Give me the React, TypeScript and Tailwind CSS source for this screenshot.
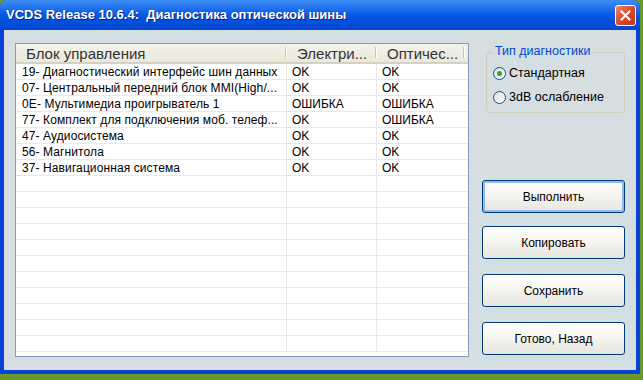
import React from "react";

const rows = [
  ["19- Диагностический интерфейс шин данных", "OK", "OK"],
  ["07- Центральный передний блок MMI(High/...", "OK", "OK"],
  ["0E- Мультимедиа проигрыватель 1", "ОШИБКА", "ОШИБКА"],
  ["77- Комплект для подключения моб. телеф...", "OK", "ОШИБКА"],
  ["47- Аудиосистема", "OK", "OK"],
  ["56- Магнитола", "OK", "OK"],
  ["37- Навигационная система", "OK", "OK"],
];

const emptyRows = Array.from({ length: 11 });

function HeaderCell({ label, width }: { label: string; width: string }) {
  return (
    <div className={`${width} h-full flex items-center pl-[10px] relative`}>
      <span className="text-[15px] text-[#333] leading-none">{label}</span>
      <div className="absolute right-0 top-[3px] bottom-[4px] w-[2px] border-l border-[#c7c5b2] bg-white" />
    </div>
  );
}

function Row({ cells }: { cells: string[] }) {
  return (
    <div className="flex h-[16px] border-b border-[#ebe8df]">
      <div className="w-[271px] border-r border-[#ebe8df] pl-[6px] flex items-center text-[12px] tracking-[0.1px] leading-none whitespace-nowrap overflow-hidden">
        {cells[0]}
      </div>
      <div className="w-[90px] border-r border-[#ebe8df] pl-[5px] flex items-center text-[12px] leading-none">
        {cells[1]}
      </div>
      <div className="w-[88px] pl-[5px] flex items-center text-[12px] leading-none">
        {cells[2]}
      </div>
    </div>
  );
}

function Radio({ checked, label }: { checked?: boolean; label: string }) {
  return (
    <div className="flex items-center gap-[3px]">
      <div className="w-[13px] h-[13px] rounded-full border border-[#1c5180] bg-gradient-to-br from-[#dcdcd6] to-white flex items-center justify-center">
        {checked && <div className="w-[5px] h-[5px] rounded-full bg-[#2fa52f]" />}
      </div>
      <span className="text-[12.5px] leading-none">{label}</span>
    </div>
  );
}

function XpButton({ label, focused, className = "" }: { label: string; focused?: boolean; className?: string }) {
  return (
    <button
      className={`w-[143px] h-[33px] rounded-[3px] border border-[#003c74] bg-gradient-to-b from-white via-[#f4f4f0] to-[#e6e5de] text-[12px] text-black flex items-center justify-center ${className} ${
        focused ? "shadow-[inset_0_0_0_2px_#98b8f1]" : ""
      }`}
    >
      {label}
    </button>
  );
}

export default function App() {
  return (
    <div
      className="w-[643px] h-[380px] bg-[#6a9a2c] overflow-hidden"
      style={{ fontFamily: '"Liberation Sans", Arial, sans-serif' }}
    >
      <div className="w-[640px] h-[374px] rounded-t-[7px] bg-[#0a3fd8] flex flex-col">
        {/* title bar */}
        <div className="h-[30px] rounded-t-[7px] bg-gradient-to-b from-[#3d8df5] via-[#0558e6] to-[#0346d0] flex items-center justify-between pl-[6px] pr-[4px]">
          <span className="text-white font-bold text-[13px] [text-shadow:1px_1px_0_#0a1f7a]">
            VCDS Release 10.6.4:&nbsp; Диагностика оптической шины
          </span>
          <div className="w-[21px] h-[21px] rounded-[3px] border border-white bg-gradient-to-br from-[#e98a6c] via-[#d9492a] to-[#c2381b] flex items-center justify-center">
            <svg width="11" height="11" viewBox="0 0 11 11">
              <path d="M1.5 1.5 L9.5 9.5 M9.5 1.5 L1.5 9.5" stroke="white" strokeWidth="2" strokeLinecap="square" />
            </svg>
          </div>
        </div>

        {/* client */}
        <div className="flex-1 mx-[4px] mb-[4px] bg-[#d5dfe2] flex pt-[13px] pl-[11px]">
          {/* list view */}
          <div className="w-[454px] h-[314px] border border-[#7f9db9] bg-white overflow-hidden">
            <div className="h-[20px] flex bg-gradient-to-b from-[#f3f2ea] to-[#ebe9dc] border-b-[2px] border-[#d6d2c2]">
              <HeaderCell label="Блок управления" width="w-[271px]" />
              <HeaderCell label="Электри..." width="w-[90px]" />
              <HeaderCell label="Оптичес..." width="w-[88px]" />
            </div>
            {rows.map((r, i) => (
              <Row key={i} cells={r} />
            ))}
            {emptyRows.map((_, i) => (
              <Row key={"e" + i} cells={["", "", ""]} />
            ))}
          </div>

          {/* right panel */}
          <div className="ml-[13px] flex flex-col">
            <div className="relative mt-[9px] ml-[4px] w-[139px] h-[61px] border border-[#d0d0bf] rounded-[3px] pl-[6px] pt-[14px] flex flex-col gap-[11px]">
              <span className="absolute -top-[8px] left-[6px] px-[2px] bg-[#d5dfe2] text-[12.5px] text-[#0046d5] leading-none">
                Тип диагностики
              </span>
              <Radio checked label="Стандартная" />
              <Radio label="3dB ослабление" />
            </div>
            <div className="mt-[67px] flex flex-col">
              <XpButton label="Выполнить" focused />
              <XpButton label="Копировать" className="mt-[13px]" />
              <XpButton label="Сохранить" className="mt-[15px]" />
              <XpButton label="Готово, Назад" className="mt-[15px]" />
            </div>
          </div>
        </div>
      </div>
    </div>
  );
}
